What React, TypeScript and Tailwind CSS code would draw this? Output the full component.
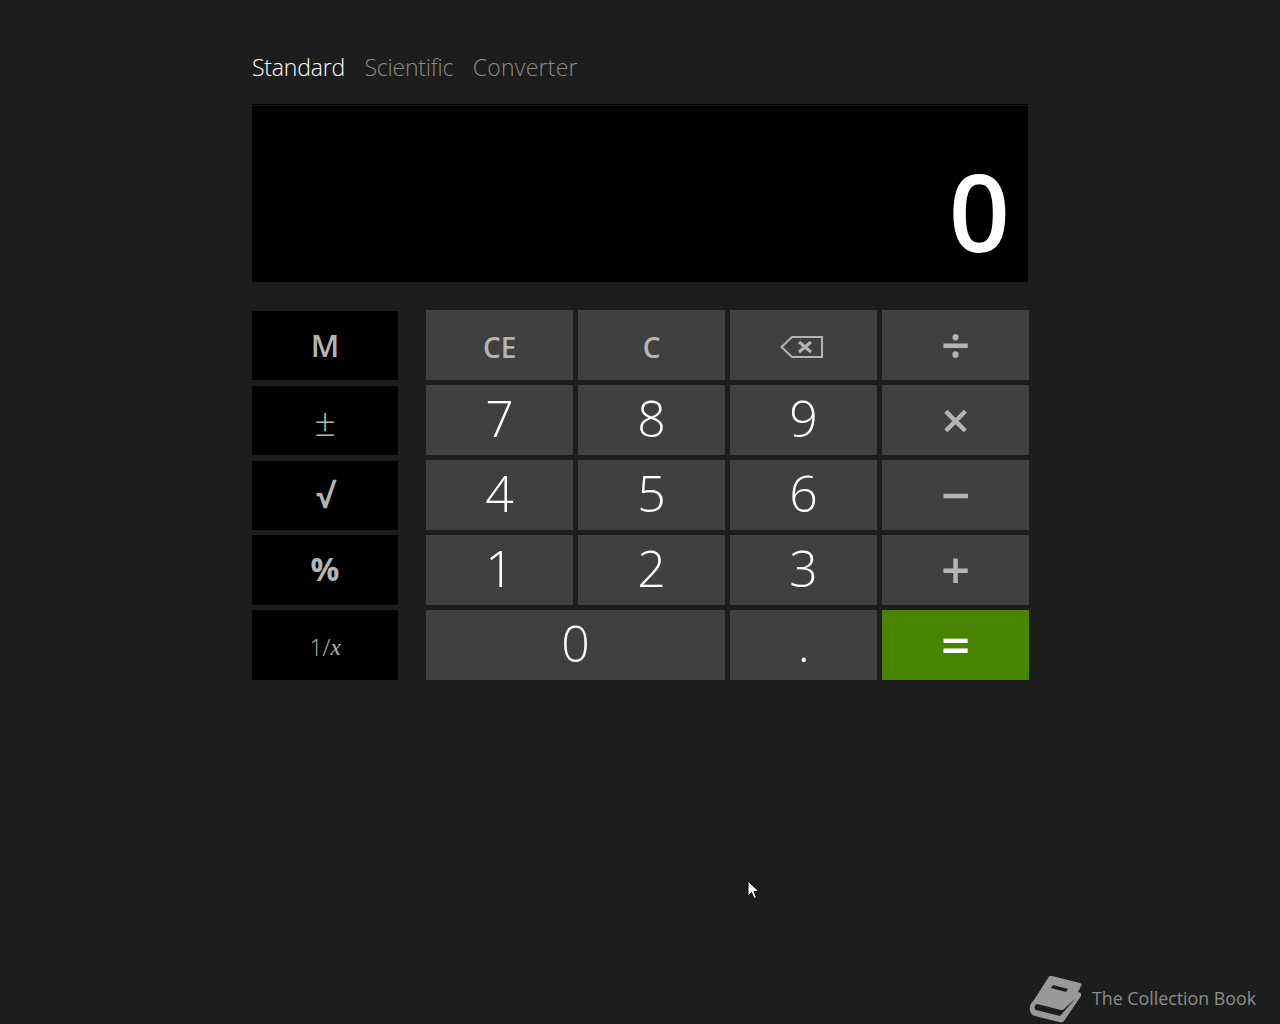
const fontStack = "font-['Open_Sans','Noto_Sans',sans-serif]";

const BackspaceIcon = () => (
  <svg width="43" height="22" viewBox="0 0 43 22" fill="none" stroke="#b4b4b4" strokeWidth="2">
    <path d="M1.5 11 L12 1 H42 V21 H12 Z" />
    <path d="M19 6 L31 16 M31 6 L19 16" strokeWidth="3" />
  </svg>
);

const BookIcon = () => (
  <svg width="60" height="52" viewBox="0 0 60 52">
    <path d="M26 4 L54 11 C56 12 56 13 55 14 L52 20 L55 21 L55 24 L38 49 C37 50 35 51 33 50 L9 44 C5 43 3 39 4 35 C4 32 6 30 8 28 L22 6 C23 4 24 4 26 4 Z" fill="#999999" />
    <path d="M27 13 L42 17 L40 20 L25 16 Z" fill="#1d1d1d" />
    <path d="M11 32 C8 33 8 37 10 38 L34 44 L50 26 L38 37 C37 38 36 38 35 38 Z" fill="#1d1d1d" />
  </svg>
);

const CursorIcon = () => (
  <svg width="13" height="20" viewBox="0 0 13 20">
    <path d="M1 1 V16 L4.5 12.5 L7 18.5 L9.5 17.5 L7 11.5 H12 Z" fill="#ffffff" stroke="#000000" strokeWidth="1" />
  </svg>
);

const NumKey = ({ label, wide }: { label: string; wide?: boolean }) => (
  <button className={`bg-[#404040] text-white text-[50px] font-light leading-none flex items-center justify-center pb-[4px] ${wide ? 'col-span-2' : ''}`}>
    {label}
  </button>
);

const OpKey = ({ label }: { label: string }) => (
  <button className="bg-[#404040] text-[#b4b4b4] text-[51px] font-semibold leading-none flex items-center justify-center pb-[2px]">
    {label}
  </button>
);

const MemKey = ({ label, className }: { label: string; className: string }) => (
  <button className={`h-[69.25px] bg-black leading-none flex items-center justify-center ${className}`}>
    {label}
  </button>
);

const App = () => {
  return (
    <div className={`relative h-[1024px] overflow-hidden bg-[#1d1d1d] flex flex-col ${fontStack}`}>
      <div className="pl-[252px]">
        {/* Tabs */}
        <div className="flex gap-[19.5px] pt-[50px] h-[104px] text-[23px] tracking-[-0.2px] font-light leading-[34px]">
          <span className="text-white">Standard</span>
          <span className="text-[#8a8a8a]">Scientific</span>
          <span className="text-[#8a8a8a] tracking-[0.25px]">Converter</span>
        </div>

        {/* Display */}
        <div className="w-[776px] h-px bg-black" />
        <div className="w-[776px] h-[177px] bg-black border-t border-[#141414] flex items-end justify-end pr-[18px]">
          <span className="text-white text-[107px] font-semibold leading-none pb-[18px]">0</span>
        </div>

        <div className="flex mt-[28px]">
          {/* Memory column */}
          <div className="w-[146px] flex flex-col gap-[5.5px] pt-[1px] text-[#b4b4b4]">
            <MemKey label="M" className="text-[31px] font-semibold" />
            <MemKey label="±" className="text-[38px] font-light pt-[1px]" />
            <MemKey label="√" className="text-[33px] font-bold" />
            <MemKey label="%" className="text-[32px] font-bold pb-[1px]" />
            <button className="h-[70px] bg-black text-[23px] leading-none flex items-center justify-center pt-[5px]">
              <span className="font-light">1/</span>
              <span className="font-['Liberation_Serif',serif] italic">x</span>
            </button>
          </div>

          {/* Keypad */}
          <div className="ml-[28px] w-[604px] grid grid-cols-[repeat(4,147.25px)] grid-rows-[repeat(5,70px)] gap-x-[4.75px] gap-y-[5px]">
            <button className="bg-[#404040] text-[#b4b4b4] text-[28px] font-semibold leading-none flex items-center justify-center pt-[3px]">CE</button>
            <button className="bg-[#404040] text-[#b4b4b4] text-[28px] font-semibold leading-none flex items-center justify-center pt-[3px]">C</button>
            <button className="bg-[#404040] flex items-center justify-center pt-[3px] pr-[5px]"><BackspaceIcon /></button>
            <OpKey label="÷" />
            <NumKey label="7" />
            <NumKey label="8" />
            <NumKey label="9" />
            <OpKey label="×" />
            <NumKey label="4" />
            <NumKey label="5" />
            <NumKey label="6" />
            <OpKey label="−" />
            <NumKey label="1" />
            <NumKey label="2" />
            <NumKey label="3" />
            <OpKey label="+" />
            <NumKey label="0" wide />
            <NumKey label="." />
            <button className="bg-[#488400] text-white text-[51px] font-semibold leading-none flex items-center justify-center pb-[2px]">=</button>
          </div>
        </div>
      </div>

      {/* Footer watermark */}
      <div className="mt-auto flex items-end justify-end gap-[6px] pr-[24px] h-[52px]">
        <BookIcon />
        <span className="text-[#8c8c8c] text-[17.8px] leading-none pb-[16px]">The Collection Book</span>
      </div>

      <div className="absolute left-[747px] top-[880px]">
        <CursorIcon />
      </div>
    </div>
  );
};

export default App;
